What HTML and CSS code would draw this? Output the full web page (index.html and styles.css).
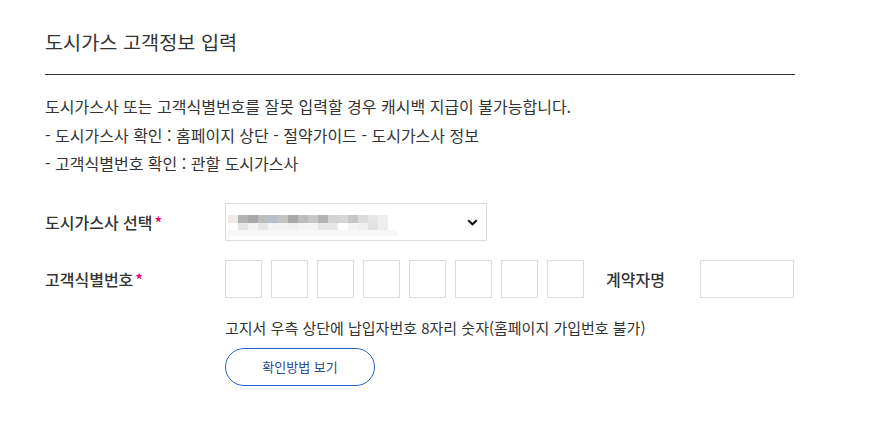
FILE: index.html
```html
<!DOCTYPE html>
<html lang="ko">
<head>
<meta charset="utf-8">
<link rel="stylesheet" href="styles.css">
</head>
<body>
<div class="wrap">
  <h2 class="title">도시가스 고객정보 입력</h2>
  <div class="notice">
    <p>도시가스사 또는 고객식별번호를 잘못 입력할 경우 캐시백 지급이 불가능합니다.</p>
    <p>- 도시가스사 확인 : 홈페이지 상단 - 절약가이드 - 도시가스사 정보</p>
    <p>- 고객식별번호 확인 : 관할 도시가스사</p>
  </div>
  <div class="row row-select">
    <div class="label">도시가스사 선택<span class="req">*</span></div>
    <div class="select">
      <div class="blur">
        <div class="blur-top">
          <i style="background:#efe8e6"></i><i style="background:#b3b3b3"></i><i style="background:#a8a8a8"></i><i style="background:#bdbdbd"></i><i style="background:#b8bfca"></i><i style="background:#c4c4c4"></i><i style="background:#a9a9a9"></i><i style="background:#bdbdbd"></i><i style="background:#c8c8c8"></i><i style="background:#b3b3b3"></i><i style="background:#d3d3d3"></i><i style="background:#d6d6d6"></i><i style="background:#c6c6c6"></i><i style="background:#dcdcdc"></i><i style="background:#e6e6e6"></i><i style="background:#eeeeee"></i>
        </div>
        <div class="blur-bot">
          <i style="background:#fdfdfd"></i><i style="background:#e4e4e4"></i><i style="background:#f2f2f2"></i><i style="background:#e6e6e6"></i><i style="background:#f0f2f4"></i><i style="background:#f3f3f3"></i><i style="background:#f1f1f1"></i><i style="background:#f4f4f4"></i><i style="background:#f4f4f4"></i><i style="background:#e6e6e6"></i><i style="background:#e4e6e8"></i><i style="background:#ffffff"></i><i style="background:#f4f4f4"></i><i style="background:#f0f0f0"></i><i style="background:#e2e2e2"></i><i style="background:#ececec"></i>
        </div>
        <div class="blur-strip"></div>
      </div>
      <svg class="chev" width="11" height="7" viewBox="0 0 11 7"><path d="M1.2 1.2 L5.5 5.3 L9.8 1.2" fill="none" stroke="#111" stroke-width="2"/></svg>
    </div>
  </div>
  <div class="row row-code">
    <div class="label">고객식별번호<span class="req">*</span></div>
    <div class="codes">
      <input class="box" type="text"><input class="box" type="text"><input class="box" type="text"><input class="box" type="text"><input class="box" type="text"><input class="box" type="text"><input class="box" type="text"><input class="box" type="text">
    </div>
    <div class="label2">계약자명</div>
    <input class="name" type="text">
  </div>
  <div class="help">
    <p>고지서 우측 상단에 납입자번호 8자리 숫자(홈페이지 가입번호 불가)</p>
    <button class="btn" type="button">확인방법 보기</button>
  </div>
</div>
</body>
</html>
```
FILE: styles.css
```css
* { box-sizing: border-box; }
html, body { margin: 0; padding: 0; background: #fff; }
body {
  font-family: "Noto Sans CJK KR", "Noto Sans", sans-serif;
  color: #333;
}
.wrap {
  width: 750px;
  margin-left: 45px;
  padding-top: 28px;
}
.title {
  margin: 0;
  font-size: 19.7px;
  font-weight: 400;
  line-height: 28px;
  color: #333;
  padding-bottom: 18px;
  border-bottom: 1px solid #333;
}
.notice {
  margin-top: 17px;
  font-size: 16px;
  line-height: 28.5px;
  color: #333;
}
.notice p { margin: 0; }
.row {
  display: flex;
  align-items: center;
}
.row-select { margin-top: 25px; }
.label {
  width: 180px;
  font-size: 16px;
  font-weight: 500;
  color: #333;
}
.req {
  color: #e4006f;
  margin-left: 2px;
}
.select {
  width: 262px;
  height: 38px;
  border: 1px solid #ddd;
  position: relative;
  display: flex;
  align-items: center;
  justify-content: space-between;
  padding: 0 8px 0 2px;
}
.blur { display: flex; flex-direction: column; margin-top: 8px; }
.blur-top, .blur-bot { display: flex; }
.blur i { display: block; width: 10px; height: 8px; }
.blur-bot i { height: 7px; }
.blur-strip { width: 170px; height: 6px; background: #f7f7f7; }
.chev { display: block; margin-top: 1px; }
.row-code { margin-top: 19px; }
.codes {
  display: flex;
  gap: 9px;
}
.box {
  width: 37px;
  height: 38px;
  border: 1px solid #ddd;
  margin: 0;
  padding: 0;
  outline: none;
}
.label2 {
  margin-left: 22px;
  width: 94px;
  font-size: 16px;
  font-weight: 500;
  color: #333;
}
.name {
  width: 94px;
  height: 38px;
  border: 1px solid #ddd;
  margin: 0;
  padding: 0;
}
.help {
  margin-left: 180px;
  margin-top: 19px;
}
.help p {
  margin: 0;
  font-size: 15px;
  line-height: 22px;
  color: #333;
}
.btn {
  margin-top: 9px;
  width: 150px;
  height: 38px;
  border: 1px solid #2e62c9;
  border-radius: 19px;
  background: #fff;
  color: #2d4c8f;
  font-family: "Noto Sans CJK KR", "Noto Sans", sans-serif;
  font-size: 13px;
  padding: 0;
}
```
